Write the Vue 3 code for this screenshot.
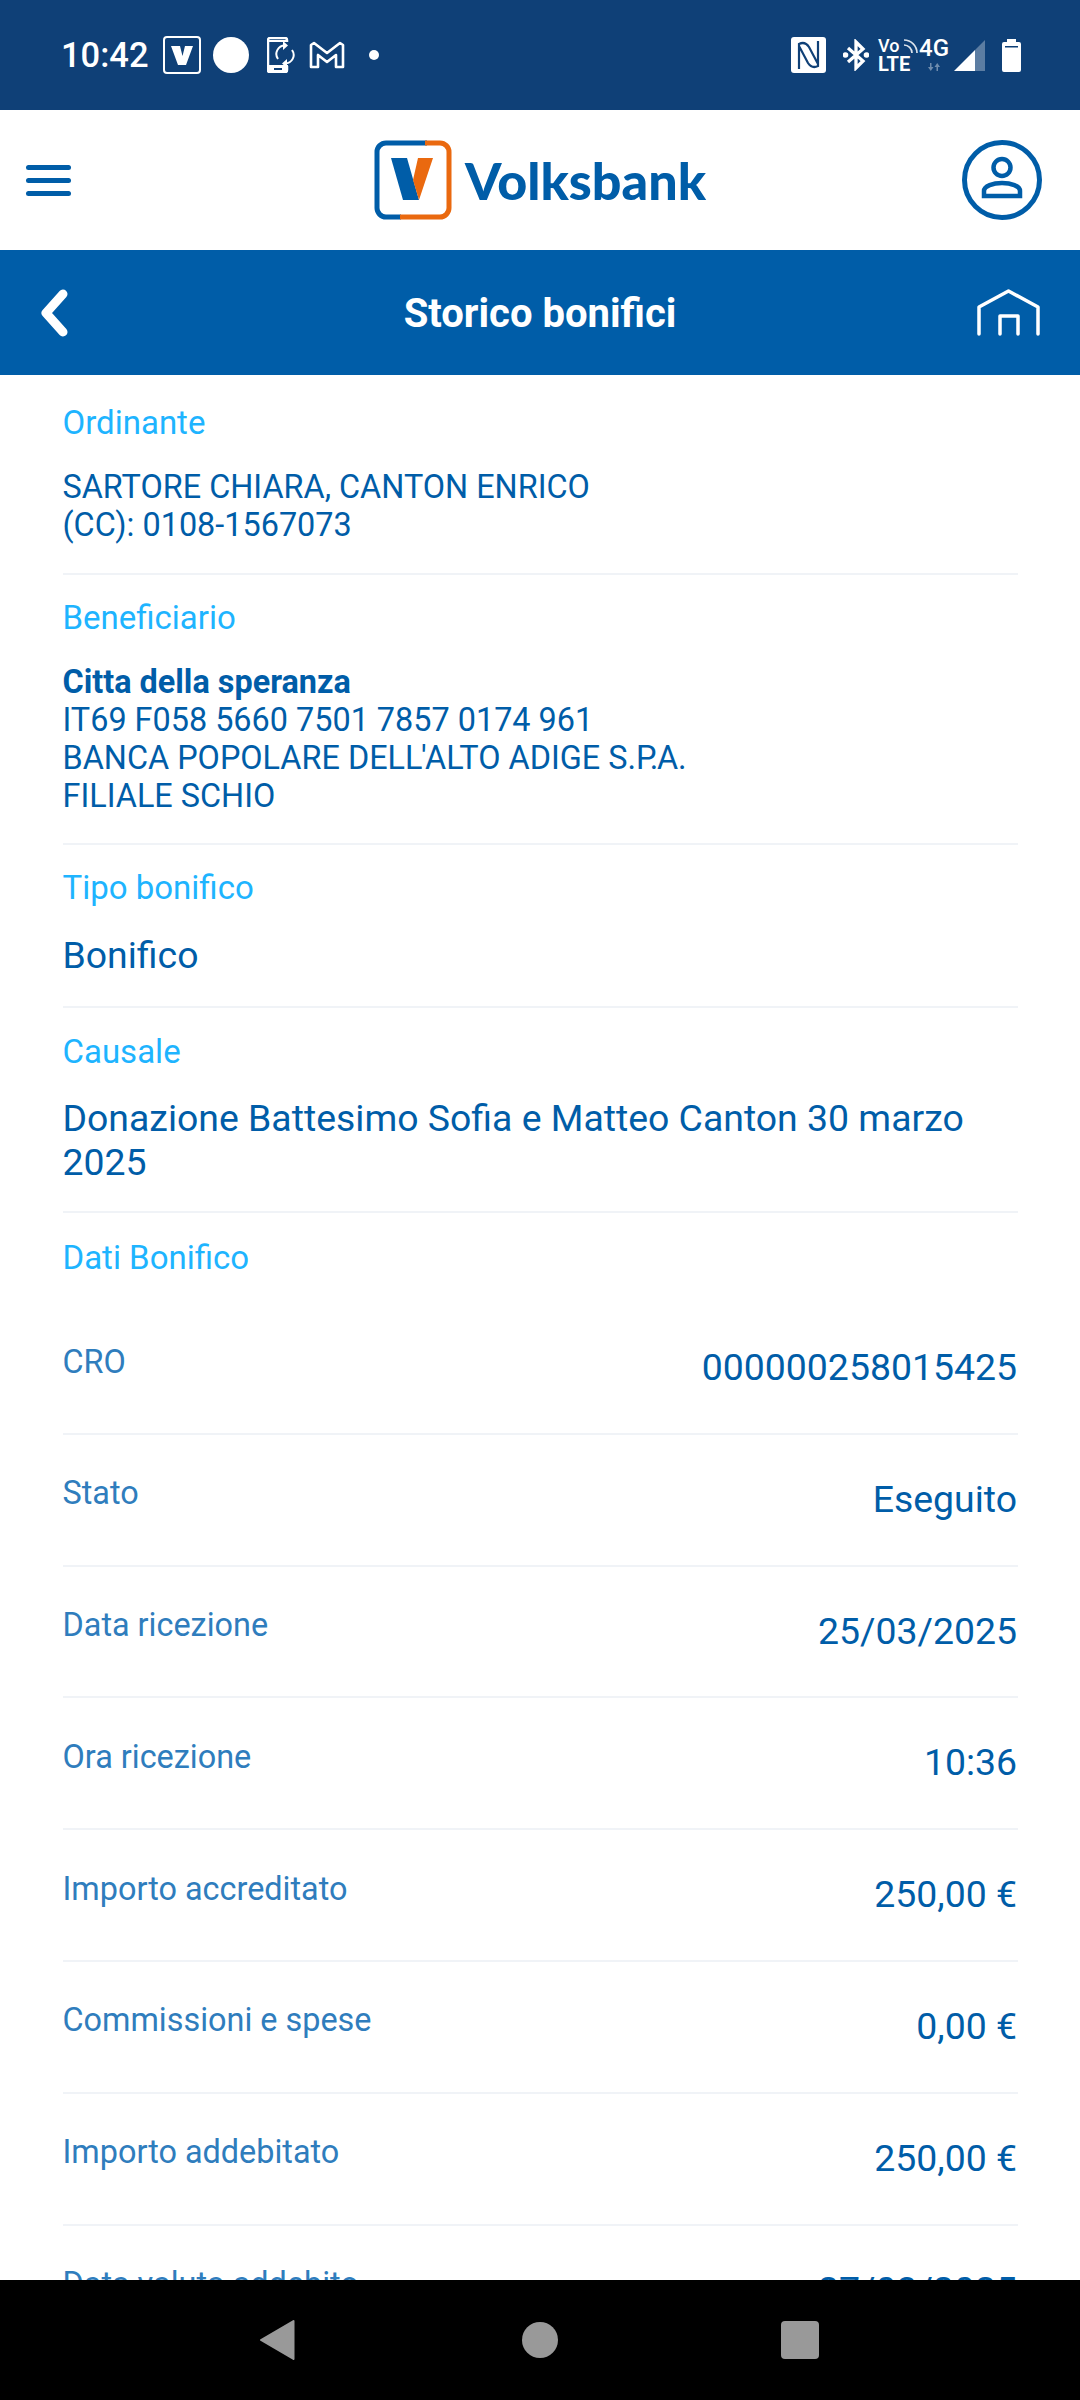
<script setup>
const rows = [
  ['CRO', '000000258015425'],
  ['Stato', 'Eseguito'],
  ['Data ricezione', '25/03/2025'],
  ['Ora ricezione', '10:36'],
  ['Importo accreditato', '250,00 €'],
  ['Commissioni e spese', '0,00 €'],
  ['Importo addebitato', '250,00 €'],
  ['Data valuta addebito', '27/03/2025'],
]
</script>

<template>
  <div class="page">
    <div class="status">
      <div class="status-left">
        <span class="time">10:42</span>
        <svg class="si" width="38" height="38" viewBox="0 0 38 38"><rect x="1" y="1" width="36" height="36" rx="3" fill="none" stroke="#fff" stroke-width="2"/><path d="M8 10h9l2.500 10L22 10h8l-7 19h-8z" fill="#fff"/></svg>
        <span class="dot-big"></span>
        <svg class="si phone" width="28" height="36" viewBox="0 0 28 36"><path d="M20 5V3a2 2 0 0 0-2-2H3a2 2 0 0 0-2 2v30a2 2 0 0 0 2 2h15a2 2 0 0 0 2-2v-4" fill="none" stroke="#fff" stroke-width="2.500"/><path d="M1 3h19v2H1z" fill="#fff"/><path fill-rule="evenodd" d="M1 28h20v5a3 3 0 0 1-3 3H3a3 3 0 0 1-3-3v-5zm6 3v2h8v-2z" fill="#fff"/><path d="M11 22A8.500 8.500 0 0 1 18 8.500M25 13a8.500 8.500 0 0 1-7 13.500" fill="none" stroke="#fff" stroke-width="2"/><path d="M16 4l5 4.500-5 4.500zM20 22l-5 4.500 5 4.500z" fill="#fff"/></svg>
        <svg class="si gm" width="36" height="28" viewBox="0 0 36 28"><path d="M2 26V4l3-2 13 10L31 2l3 2v22h-7V14l-9 7-9-7v12z" fill="none" stroke="#fff" stroke-width="2.600" stroke-linejoin="round"/></svg>
        <span class="dot-small"></span>
      </div>
      <div class="status-right">
        <svg class="si" width="35" height="36" viewBox="0 0 35 36"><rect width="35" height="36" rx="3" fill="#fff"/><path d="M8 32V7q6-3 10 3l9 17M27 4v25q-6 3-10-3L8 9" fill="none" stroke="#0f4077" stroke-width="2.200"/></svg>
        <svg class="si bt" width="26" height="32" viewBox="0 0 26 32"><path d="M5 9l15 13-7 7V3l7 7L5 23" fill="none" stroke="#fff" stroke-width="3.300"/><circle cx="2.500" cy="16" r="2.800" fill="#fff"/><circle cx="23.500" cy="16" r="2.800" fill="#fff"/></svg>
        <div class="volte">
          <span class="vo">Vo</span><span class="lte">LTE</span>
          <svg class="wave" width="15" height="14" viewBox="0 0 15 14"><path d="M1 1a13 13 0 0 1 13 13M1 6a8 8 0 0 1 8 8" fill="none" stroke="#fff" stroke-width="1.700" opacity=".85"/></svg>
        </div>
        <div class="net">
          <span class="fourg">4G</span>
          <svg class="arrows" width="12" height="8" viewBox="0 0 12 8"><path d="M2 0h1.500v4H5.500L2.750 8 0 4h2zM8.500 8h1.500V4h2L9.250 0 6.500 4h2z" fill="#fff" opacity=".4"/></svg>
        </div>
        <svg class="si signal" width="31" height="31" viewBox="0 0 31 31"><path d="M21 10L31 0v31H21z" fill="#fff" opacity=".32"/><path d="M0 31L21 10v21z" fill="#fff"/></svg>
        <svg class="si batt" width="19" height="33" viewBox="0 0 19 33"><path fill="#fff" d="M5 0h9v3h3a2 2 0 0 1 2 2v26a2 2 0 0 1-2 2H2a2 2 0 0 1-2-2V5a2 2 0 0 1 2-2h3z"/><rect x="3" y="7" width="13" height="1.500" fill="#0f4077"/></svg>
      </div>
    </div>

    <div class="brand">
      <div class="burger"><i></i><i></i><i></i></div>
      <div class="logo">
        <svg width="78" height="80" viewBox="0 0 78 80">
          <path d="M53 3H12a9 9 0 0 0-9 9v56a9 9 0 0 0 9 9h15" fill="none" stroke="#005da8" stroke-width="5"/>
          <path d="M51 3h15a9 9 0 0 1 9 9v56a9 9 0 0 1-9 9H26" fill="none" stroke="#ea690f" stroke-width="5"/>
          <path d="M17 18h16l12 42H29z" fill="#005da8"/>
          <path d="M44 18h15L45 60l-6-20z" fill="#ea690f"/>
        </svg>
        <span class="word">Volksbank</span>
      </div>
      <svg class="user" width="80" height="80" viewBox="0 0 80 80">
        <circle cx="40" cy="40" r="37.500" fill="none" stroke="#005da8" stroke-width="5"/>
        <circle cx="40" cy="27.500" r="8.500" fill="none" stroke="#005da8" stroke-width="4.500"/>
        <path d="M22 56v-5c0-5 9-8 18-8s18 3 18 8v5z" fill="none" stroke="#005da8" stroke-width="4.500"/>
      </svg>
    </div>

    <div class="titlebar">
      <svg class="back" width="30" height="48" viewBox="0 0 30 48"><path d="M23 5L6 24l17 19" fill="none" stroke="#fff" stroke-width="9" stroke-linecap="round" stroke-linejoin="round"/></svg>
      <span class="title">Storico bonifici</span>
      <svg class="home" width="63" height="47" viewBox="0 0 63 47"><path d="M2 45V18L31.500 2 61 18v27M23 45V27h18v18" fill="none" stroke="#fff" stroke-width="3.500" stroke-linecap="round" stroke-linejoin="round"/></svg>
    </div>

    <main class="content">
      <section class="block first">
        <div class="label">Ordinante</div>
        <div class="small">SARTORE CHIARA, CANTON ENRICO<br>(CC): 0108-1567073</div>
      </section>
      <section class="block second">
        <div class="label">Beneficiario</div>
        <div class="small"><b>Citta della speranza</b><br>IT69 F058 5660 7501 7857 0174 961<br>BANCA POPOLARE DEL<span class="tight">L'</span>ALTO ADIGE S.<span class="tight">P.</span>A.<br>FILIALE SCHIO</div>
      </section>
      <section class="block">
        <div class="label">Tipo bonifico</div>
        <div class="large one">Bonifico</div>
      </section>
      <section class="block fourth">
        <div class="label">Causale</div>
        <div class="large">Donazione Battesimo Sofia e Matteo Canton 30 marzo 2025</div>
      </section>
      <section class="dati">
        <div class="label">Dati Bonifico</div>
        <div v-for="r in rows" :key="r[0]" class="row">
          <span class="k">{{ r[0] }}</span>
          <span class="v">{{ r[1] }}</span>
        </div>
      </section>
    </main>

    <nav class="nav">
      <svg class="tri" width="36" height="42" viewBox="0 0 36 42"><path d="M34.500 2L2 21l32.500 19z" fill="#999" stroke="#999" stroke-width="2" stroke-linejoin="round"/></svg>
      <span class="nc"></span>
      <span class="ns"></span>
    </nav>
  </div>
</template>

<style>
html, body { margin: 0; background: #fff; }
</style>

<style scoped>
.page { width: 1080px; height: 2400px; display: flex; flex-direction: column; overflow: hidden; font-family: Roboto, sans-serif; color: #005da8; background: #fff; }
.status { height: 110px; flex: none; background: #0f4077; color: #fff; display: flex; justify-content: space-between; align-items: center; padding: 0 59px 0 61px; box-sizing: border-box; }
.status-left, .status-right { display: flex; align-items: center; }
.time { font-size: 34.500px; font-weight: 500; margin-right: 14px; }
.si { display: block; flex: none; }
.dot-big { width: 36px; height: 36px; border-radius: 50%; background: #fff; margin-left: 12px; }
.phone { margin-left: 18px; }
.gm { margin-left: 14px; }
.dot-small { width: 10px; height: 10px; border-radius: 50%; background: #fff; margin-left: 24px; }
.bt { margin-left: 17px; }
.volte { position: relative; display: flex; flex-direction: column; margin-left: 9px; width: 39px; font-weight: 500; }
.vo { font-size: 18px; line-height: 19px; }
.lte { font-size: 20px; line-height: 19px; font-weight: 700; }
.wave { position: absolute; left: 25px; top: 3px; }
.net { display: flex; flex-direction: column; align-items: center; margin-left: 3px; width: 28px; }
.fourg { font-size: 24px; line-height: 24px; font-weight: 500; }
.arrows { display: block; margin-top: 3px; margin-bottom: 3px; }
.signal { margin-left: 6px; }
.batt { margin-left: 17px; }

.brand { height: 140px; flex: none; display: grid; grid-template-columns: 1fr auto 1fr; align-items: center; padding: 0 38px; box-sizing: border-box; }
.burger { width: 45px; margin-left: -12px; display: flex; flex-direction: column; gap: 8px; }
.burger i { display: block; height: 5px; border-radius: 3px; background: #005da8; }
.logo { display: flex; align-items: center; gap: 13px; }
.word { font-family: Lato, sans-serif; font-weight: 900; font-size: 52px; line-height: 80px; }
.user { display: block; justify-self: end; }

.titlebar { height: 125px; flex: none; background: #005da8; color: #fff; display: grid; grid-template-columns: 1fr auto 1fr; align-items: center; padding: 0 40px; box-sizing: border-box; }
.title { font-size: 40px; font-weight: 700; margin-top: 2px; }
.home { justify-self: end; }

.content { flex: 1; min-height: 0; overflow: hidden; padding: 0 62px 0 62.500px; }
.block { border-bottom: 2px solid #f0f3f7; padding: 24px 0 29px; }
.block.first { padding-top: 29px; }
.block.second { padding-bottom: 28px; }
.block.fourth { padding: 25px 0 27px; }
.label { color: #1eb4ff; font-size: 33px; line-height: 38px; }
.small { font-size: 32.400px; line-height: 38px; margin-top: 26px; }
.small b { font-weight: 700; }
.tight { letter-spacing: -1.500px; }
.large { font-size: 37.400px; line-height: 44px; margin-top: 25px; }
.large.one { margin-top: 26px; }
.dati { padding-top: 26px; }
.dati .label { margin-bottom: 26px; }
.row { height: 131.800px; box-sizing: border-box; border-bottom: 2px solid #f0f3f7; display: flex; justify-content: space-between; }
.k { font-size: 32.400px; line-height: 38px; color: #2f7dbd; margin-top: 39.500px; }
.v { font-size: 37.400px; line-height: 44px; margin-top: 42px; margin-right: 1px; }

.nav { height: 120px; flex: none; background: #000; position: relative; }
.tri { position: absolute; left: 259px; top: 39px; }
.nc { position: absolute; left: 522px; top: 42px; width: 36px; height: 36px; border-radius: 50%; background: #999; }
.ns { position: absolute; left: 781px; top: 41px; width: 38px; height: 38px; border-radius: 4px; background: #999; }
</style>
